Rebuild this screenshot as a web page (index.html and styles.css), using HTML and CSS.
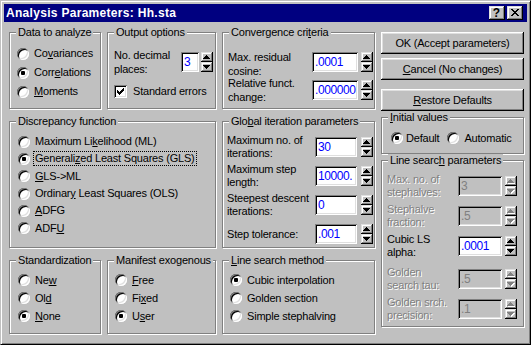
FILE: index.html
```html
<!DOCTYPE html>
<html lang="en">
<head>
<meta charset="utf-8">
<title>Analysis Parameters: Hh.sta</title>
<link rel="stylesheet" href="styles.css">
</head>
<body>
<div class="window">
  <div class="titlebar">
    <span class="title">Analysis Parameters: Hh.sta</span>
    <div class="caption">
      <span class="cbtn help">?</span>
      <span class="cbtn close"><svg width="16" height="14" viewBox="0 0 16 14"><path d="M4 3h2v1h-2z M10 3h2v1h-2z M5 4h2v1h-2z M9 4h2v1h-2z M6 5h4v1h-4z M7 6h2v1h-2z M6 7h4v1h-4z M5 8h2v1h-2z M9 8h2v1h-2z M4 9h2v1h-2z M10 9h2v1h-2z"/></svg></span>
    </div>
  </div>
  <div class="client">
    <div class="groups">
      <fieldset class="g data">
        <legend>Data to analyze</legend>
        <div class="body">
          <div class="opt"><span class="radio"></span><span>Co<u>v</u>ariances</span></div>
          <div class="opt"><span class="radio on"></span><span>Corr<u>e</u>lations</span></div>
          <div class="opt"><span class="radio"></span><span><u>M</u>oments</span></div>
        </div>
      </fieldset>

      <fieldset class="g output">
        <legend>Output options</legend>
        <div class="body">
          <div class="frow">
            <span class="lbl">No. decimal<br>places:</span>
            <span class="edit w18">3</span>
            <span class="spin m2">
              <span class="sbtn"><svg width="12" height="10" viewBox="0 0 12 10"><path d="M5 3h1v1h1v1h1v1h1v1H2V6h1V5h1V4h1z"/></svg></span>
              <span class="sbtn"><svg width="12" height="10" viewBox="0 0 12 10"><path d="M2 3h7v1h-1v1h-1v1h-1v1h-1v-1h-1v-1h-1v-1h-1z"/></svg></span>
            </span>
          </div>
          <div class="chkrow">
            <span class="check"><svg width="13" height="13" viewBox="0 0 13 13"><path d="M9 3h1v3H9z M8 4h1v3H8z M7 5h1v3H7z M6 6h1v3H6z M5 7h1v3H5z M4 6h1v3H4z M3 5h1v3H3z"/></svg></span>
            <span>Standard errors</span>
          </div>
        </div>
      </fieldset>

      <fieldset class="g conv">
        <legend>Convergence cri<u>t</u>eria</legend>
        <div class="body">
          <div class="frow">
            <span class="lbl first">Max. residual<br>cosine:</span>
            <span class="edit w46">.0001</span>
            <span class="spin m3">
              <span class="sbtn"><svg width="12" height="10" viewBox="0 0 12 10"><path d="M5 3h1v1h1v1h1v1h1v1H2V6h1V5h1V4h1z"/></svg></span>
              <span class="sbtn"><svg width="12" height="10" viewBox="0 0 12 10"><path d="M2 3h7v1h-1v1h-1v1h-1v1h-1v-1h-1v-1h-1v-1h-1z"/></svg></span>
            </span>
          </div>
          <div class="frow">
            <span class="lbl">Relative funct.<br>change:</span>
            <span class="edit w46">.000000</span>
            <span class="spin m3">
              <span class="sbtn"><svg width="12" height="10" viewBox="0 0 12 10"><path d="M5 3h1v1h1v1h1v1h1v1H2V6h1V5h1V4h1z"/></svg></span>
              <span class="sbtn"><svg width="12" height="10" viewBox="0 0 12 10"><path d="M2 3h7v1h-1v1h-1v1h-1v1h-1v-1h-1v-1h-1v-1h-1z"/></svg></span>
            </span>
          </div>
        </div>
      </fieldset>

      <fieldset class="g disc">
        <legend>Discrepancy function</legend>
        <div class="body">
          <div class="opt"><span class="radio"></span><span>Maximum Li<u>k</u>elihood (ML)</span></div>
          <div class="opt"><span class="radio on"></span><span class="focus">Generali<u>z</u>ed Least Squares (GLS)</span></div>
          <div class="opt"><span class="radio"></span><span><u>G</u>LS-&gt;ML</span></div>
          <div class="opt"><span class="radio"></span><span>Ordinar<u>y</u> Least Squares (OLS)</span></div>
          <div class="opt"><span class="radio"></span><span><u>A</u>DFG</span></div>
          <div class="opt"><span class="radio"></span><span>ADF<u>U</u></span></div>
        </div>
      </fieldset>

      <fieldset class="g glob">
        <legend>Glo<u>b</u>al iteration parameters</legend>
        <div class="body">
          <div class="frow">
            <span class="lbl">Maximum no. of<br>iterations:</span>
            <span class="edit w42">30</span>
            <span class="spin m4">
              <span class="sbtn"><svg width="12" height="10" viewBox="0 0 12 10"><path d="M5 3h1v1h1v1h1v1h1v1H2V6h1V5h1V4h1z"/></svg></span>
              <span class="sbtn"><svg width="12" height="10" viewBox="0 0 12 10"><path d="M2 3h7v1h-1v1h-1v1h-1v1h-1v-1h-1v-1h-1v-1h-1z"/></svg></span>
            </span>
          </div>
          <div class="frow">
            <span class="lbl">Maximum step<br>length:</span>
            <span class="edit w42">10000.</span>
            <span class="spin m4">
              <span class="sbtn"><svg width="12" height="10" viewBox="0 0 12 10"><path d="M5 3h1v1h1v1h1v1h1v1H2V6h1V5h1V4h1z"/></svg></span>
              <span class="sbtn"><svg width="12" height="10" viewBox="0 0 12 10"><path d="M2 3h7v1h-1v1h-1v1h-1v1h-1v-1h-1v-1h-1v-1h-1z"/></svg></span>
            </span>
          </div>
          <div class="frow">
            <span class="lbl">Steepest descent<br>iterations:</span>
            <span class="edit w42">0</span>
            <span class="spin m4">
              <span class="sbtn"><svg width="12" height="10" viewBox="0 0 12 10"><path d="M5 3h1v1h1v1h1v1h1v1H2V6h1V5h1V4h1z"/></svg></span>
              <span class="sbtn"><svg width="12" height="10" viewBox="0 0 12 10"><path d="M2 3h7v1h-1v1h-1v1h-1v1h-1v-1h-1v-1h-1v-1h-1z"/></svg></span>
            </span>
          </div>
          <div class="frow">
            <span class="lbl">Step tolerance:</span>
            <span class="edit w42">.001</span>
            <span class="spin m4">
              <span class="sbtn"><svg width="12" height="10" viewBox="0 0 12 10"><path d="M5 3h1v1h1v1h1v1h1v1H2V6h1V5h1V4h1z"/></svg></span>
              <span class="sbtn"><svg width="12" height="10" viewBox="0 0 12 10"><path d="M2 3h7v1h-1v1h-1v1h-1v1h-1v-1h-1v-1h-1v-1h-1z"/></svg></span>
            </span>
          </div>
        </div>
      </fieldset>

      <fieldset class="g std">
        <legend>Standardization</legend>
        <div class="body">
          <div class="opt"><span class="radio"></span><span>Ne<u>w</u></span></div>
          <div class="opt"><span class="radio"></span><span>Ol<u>d</u></span></div>
          <div class="opt"><span class="radio on"></span><span><u>N</u>one</span></div>
        </div>
      </fieldset>

      <fieldset class="g manif">
        <legend>Manifest exogenous</legend>
        <div class="body">
          <div class="opt"><span class="radio"></span><span><u>F</u>ree</span></div>
          <div class="opt"><span class="radio"></span><span>Fi<u>x</u>ed</span></div>
          <div class="opt"><span class="radio on"></span><span>U<u>s</u>er</span></div>
        </div>
      </fieldset>

      <fieldset class="g lsm">
        <legend><u>L</u>ine search method</legend>
        <div class="body">
          <div class="opt"><span class="radio on"></span><span>Cubic interpolation</span></div>
          <div class="opt"><span class="radio"></span><span>Golden section</span></div>
          <div class="opt"><span class="radio"></span><span>Simple stephalving</span></div>
        </div>
      </fieldset>
    </div>

    <div class="right">
      <div class="btn">OK (Accept parameters)</div>
      <div class="btn b2"><span><u>C</u>ancel (No changes)</span></div>
      <div class="btn b3"><span><u>R</u>estore Defaults</span></div>

      <fieldset class="g init">
        <legend><u>I</u>nitial values</legend>
        <div class="body">
          <div class="irow">
            <span class="radio on"></span><span class="t3">Default</span>
            <span class="radio auto"></span><span>Automatic</span>
          </div>
        </div>
      </fieldset>

      <fieldset class="g lsp">
        <legend>Line searc<u>h</u> parameters</legend>
        <div class="body">
          <div class="frow">
            <span class="lbl dis">Max. no. of<br>stephalves:</span>
            <span class="edit w44 off">3</span>
            <span class="spin m3 off">
              <span class="sbtn"><svg width="12" height="10" viewBox="0 0 12 10"><path class="sh" d="M6 4h1v1h1v1h1v1h1v1H3V7h1V6h1V5h1z"/><path d="M5 3h1v1h1v1h1v1h1v1H2V6h1V5h1V4h1z"/></svg></span>
              <span class="sbtn"><svg width="12" height="10" viewBox="0 0 12 10"><path class="sh" d="M3 4h7v1h-1v1h-1v1h-1v1h-1v-1h-1v-1h-1v-1h-1z"/><path d="M2 3h7v1h-1v1h-1v1h-1v1h-1v-1h-1v-1h-1v-1h-1z"/></svg></span>
            </span>
          </div>
          <div class="frow">
            <span class="lbl dis">Stephalve<br>fraction:</span>
            <span class="edit w44 off">.5</span>
            <span class="spin m3 off">
              <span class="sbtn"><svg width="12" height="10" viewBox="0 0 12 10"><path class="sh" d="M6 4h1v1h1v1h1v1h1v1H3V7h1V6h1V5h1z"/><path d="M5 3h1v1h1v1h1v1h1v1H2V6h1V5h1V4h1z"/></svg></span>
              <span class="sbtn"><svg width="12" height="10" viewBox="0 0 12 10"><path class="sh" d="M3 4h7v1h-1v1h-1v1h-1v1h-1v-1h-1v-1h-1v-1h-1z"/><path d="M2 3h7v1h-1v1h-1v1h-1v1h-1v-1h-1v-1h-1v-1h-1z"/></svg></span>
            </span>
          </div>
          <div class="frow">
            <span class="lbl">Cubic LS<br>alpha:</span>
            <span class="edit w44">.0001</span>
            <span class="spin m3">
              <span class="sbtn"><svg width="12" height="10" viewBox="0 0 12 10"><path d="M5 3h1v1h1v1h1v1h1v1H2V6h1V5h1V4h1z"/></svg></span>
              <span class="sbtn"><svg width="12" height="10" viewBox="0 0 12 10"><path d="M2 3h7v1h-1v1h-1v1h-1v1h-1v-1h-1v-1h-1v-1h-1z"/></svg></span>
            </span>
          </div>
          <div class="frow gap3">
            <span class="lbl dis">Golden<br>search tau:</span>
            <span class="edit w44 off">.5</span>
            <span class="spin m3 off">
              <span class="sbtn"><svg width="12" height="10" viewBox="0 0 12 10"><path class="sh" d="M6 4h1v1h1v1h1v1h1v1H3V7h1V6h1V5h1z"/><path d="M5 3h1v1h1v1h1v1h1v1H2V6h1V5h1V4h1z"/></svg></span>
              <span class="sbtn"><svg width="12" height="10" viewBox="0 0 12 10"><path class="sh" d="M3 4h7v1h-1v1h-1v1h-1v1h-1v-1h-1v-1h-1v-1h-1z"/><path d="M2 3h7v1h-1v1h-1v1h-1v1h-1v-1h-1v-1h-1v-1h-1z"/></svg></span>
            </span>
          </div>
          <div class="frow">
            <span class="lbl dis">Golden srch.<br>precision:</span>
            <span class="edit w44 off">.1</span>
            <span class="spin m3 off">
              <span class="sbtn"><svg width="12" height="10" viewBox="0 0 12 10"><path class="sh" d="M6 4h1v1h1v1h1v1h1v1H3V7h1V6h1V5h1z"/><path d="M5 3h1v1h1v1h1v1h1v1H2V6h1V5h1V4h1z"/></svg></span>
              <span class="sbtn"><svg width="12" height="10" viewBox="0 0 12 10"><path class="sh" d="M3 4h7v1h-1v1h-1v1h-1v1h-1v-1h-1v-1h-1v-1h-1z"/><path d="M2 3h7v1h-1v1h-1v1h-1v1h-1v-1h-1v-1h-1v-1h-1z"/></svg></span>
            </span>
          </div>
        </div>
      </fieldset>
    </div>
  </div>
</div>
</body>
</html>
```

FILE: styles.css
```css
* { box-sizing: border-box; }
html, body { margin: 0; padding: 0; }
body {
  width: 531px;
  height: 345px;
  overflow: hidden;
  background: #c0c0c0;
  color: #000;
  font-family: "Liberation Sans", Arial, sans-serif;
  font-size: 11px;
  line-height: 13px;
  letter-spacing: -0.2px;
}
u { text-decoration: underline; text-underline-offset: 1px; }

.window {
  width: 531px;
  height: 345px;
  border: 1px solid;
  border-color: #c0c0c0 #000 #000 #c0c0c0;
  box-shadow: inset 1px 1px #fff, inset -1px -1px #808080;
  padding: 3px;
  display: flex;
  flex-direction: column;
}

/* title bar */
.titlebar {
  height: 18px;
  flex: none;
  background: #000080;
  color: #fff;
  display: flex;
  align-items: center;
  padding: 0 4px 0 2px;
}
.title { font-weight: bold; font-size: 12px; letter-spacing: 0.3px; }
.caption { margin-left: auto; display: flex; gap: 2px; }
.cbtn {
  width: 16px;
  height: 14px;
  background: #c0c0c0;
  color: #000;
  box-shadow: inset -1px -1px #000, inset 1px 1px #dfdfdf, inset -2px -2px #808080, inset 2px 2px #fff;
  display: flex;
  align-items: center;
  justify-content: center;
}
.cbtn.help { font-weight: bold; font-size: 12px; line-height: 14px; letter-spacing: 0; padding-right: 1px; }
.cbtn svg { display: block; }

/* client */
.client { display: flex; padding: 4px 0 0 5px; }
.groups {
  display: grid;
  grid-template-columns: 92px 109px 153px;
  grid-template-rows: 83px 133px 80px;
  column-gap: 6px;
  row-gap: 6px;
}
.right {
  width: 143px;
  margin-left: 6px;
  padding-top: 6px;
  display: flex;
  flex-direction: column;
}

/* group boxes */
fieldset.g {
  margin: 0;
  padding: 0;
  min-width: 0;
  border: 1px solid #808080;
  box-shadow: inset 1px 1px #fff, 1px 1px #fff;
}
fieldset.g legend {
  margin-left: 6px;
  padding: 0 2px;
  line-height: 13px;
  background: #c0c0c0;
}
.glob legend { margin-left: 2px; }
.disc { grid-column: 1 / 3; }
.std, .manif, .lsm { margin-top: 1px; }

/* option rows */
.opt { display: flex; align-items: center; }
.radio {
  flex: none;
  width: 12px;
  height: 12px;
  border-radius: 50%;
  background: #fff;
  box-shadow: inset 1px 1px #808080, inset -1px -1px #fff, inset 2px 2px #000, inset -2px -2px #dfdfdf;
  margin-right: 5px;
  display: flex;
  align-items: center;
  justify-content: center;
}
.radio.on::after {
  content: "";
  width: 4px;
  height: 4px;
  border-radius: 1px;
  background: #000;
}

.data .body { padding: 5px 0 0 7px; }
.data .opt { height: 19px; }

.disc .body { padding: 5px 0 0 8px; }
.disc .opt { height: 17.3px; }
.focus { outline: 1px dotted #000; padding: 0 1px; margin-left: -1px; }

.std .body { padding: 4px 0 0 8px; }
.manif .body, .lsm .body { padding: 4px 0 0 7px; }
.std .opt, .manif .opt, .lsm .opt { height: 18px; }

/* field rows */
.frow { display: flex; align-items: center; height: 20px; }
.lbl { flex: 1; min-width: 0; white-space: nowrap; }
.edit {
  flex: none;
  height: 20px;
  background: #fff;
  color: #0000ff;
  box-shadow: inset 1px 1px #808080, inset -1px -1px #fff, inset 2px 2px #000, inset -2px -2px #dfdfdf;
  padding: 0 2px 0 3px;
  font-size: 12px;
  line-height: 20px;
  letter-spacing: -0.4px;
  overflow: hidden;
  white-space: nowrap;
}
.edit.off { background: #c0c0c0; color: #808080; }
.w18 { width: 18px; }
.w42 { width: 42px; }
.w44 { width: 44px; }
.w46 { width: 46px; }

.spin { flex: none; display: flex; flex-direction: column; }
.m2 { margin-left: 2px; }
.m3 { margin-left: 3px; }
.m4 { margin-left: 4px; }
.sbtn {
  width: 12px;
  height: 10px;
  background: #c0c0c0;
  box-shadow: inset -1px -1px #000, inset 1px 1px #dfdfdf, inset -2px -2px #808080, inset 2px 2px #fff;
}
.sbtn svg { display: block; fill: #000; }
.spin.off svg { fill: #808080; }
.spin.off svg .sh { fill: #fff; }

.dis { color: #808080; text-shadow: 1px 1px 0 #fff; }

.output .body { padding: 13px 2px 0 6px; }
.output .lbl { line-height: 14px; }
.chkrow { display: flex; align-items: center; height: 13px; margin-top: 13px; }
.check {
  flex: none;
  width: 13px;
  height: 13px;
  background: #fff;
  box-shadow: inset 1px 1px #808080, inset -1px -1px #fff, inset 2px 2px #000, inset -2px -2px #dfdfdf;
  margin-right: 6px;
}
.check svg { display: block; fill: #000; }

.conv .body { padding: 13px 1px 0 5px; display: flex; flex-direction: column; gap: 8px; }
.conv .lbl { line-height: 14px; }
.conv .lbl.first { padding-top: 4px; }

.glob .body { padding: 9px 1px 0 4px; display: flex; flex-direction: column; gap: 9px; }

/* push buttons */
.btn {
  flex: none;
  height: 22px;
  background: #c0c0c0;
  box-shadow: inset -1px -1px #000, inset 1px 1px #fff, inset -2px -2px #808080, inset 2px 2px #dfdfdf;
  display: flex;
  align-items: center;
  justify-content: center;
}
.b2 { margin-top: 4px; }
.b3 { margin-top: 9px; }

.init { margin: 3px 0 0 1px; height: 43px; flex: none; }
.init .body { padding: 6px 0 0 9px; }
.irow { display: flex; align-items: center; height: 16px; }
.init .radio { margin-right: 3px; }
.t3 { margin-right: 8px; }
.init .radio.auto { margin-right: 5px; }

.lsp { margin: 4px 0 0 1px; height: 173px; flex: none; }
.lsp .body { padding: 4px 6px 0 5px; }
.lsp .frow { height: 30px; }
.lsp .frow.gap3 { margin-top: 3px; }
```
